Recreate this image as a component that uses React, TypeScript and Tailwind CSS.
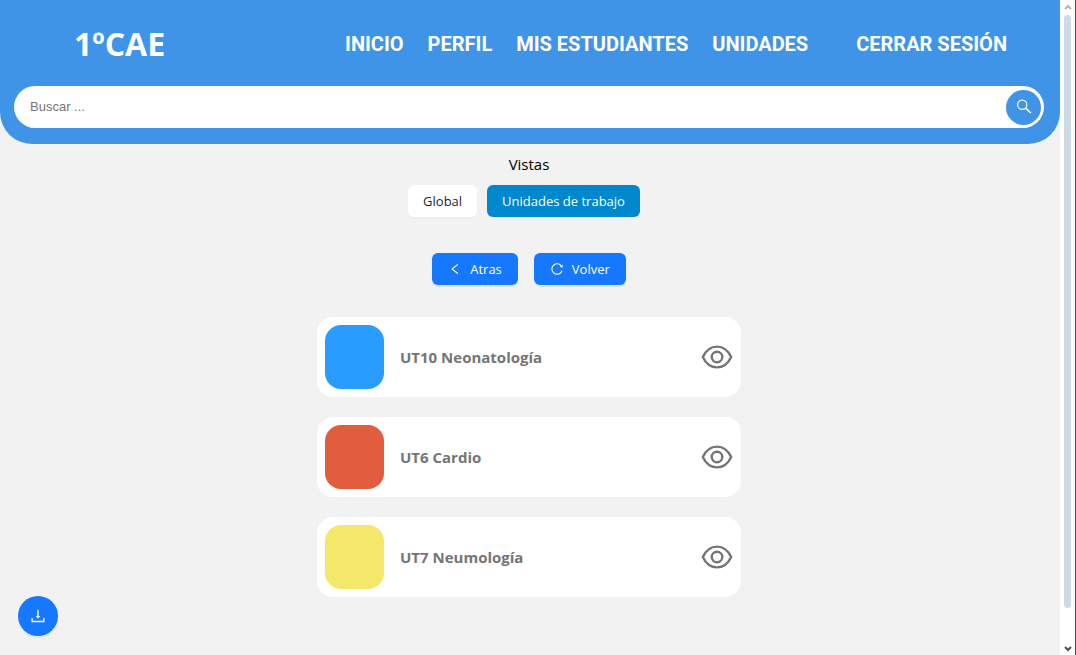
import React from "react";
import {
  AiOutlineDownload,
  AiOutlineLeft,
  AiOutlineReload,
} from "react-icons/ai";

const links = ["INICIO", "PERFIL", "MIS ESTUDIANTES", "UNIDADES"];

const units = [
  { name: "UT10 Neonatología", color: "bg-[#289dff]" },
  { name: "UT6 Cardio", color: "bg-[#e15d3e]" },
  { name: "UT7 Neumología", color: "bg-[#f3e869]" },
];

function SearchIcon() {
  return (
    <svg viewBox="0 0 16 16" className="size-4" fill="none" stroke="currentColor" strokeWidth="1.2">
      <circle cx="6.2" cy="5.7" r="4.6" />
      <path d="M9.6 9.1 14.8 14" strokeWidth="1.6" />
    </svg>
  );
}

function EyeIcon() {
  return (
    <svg viewBox="0 0 32 24" className="h-6 w-8" fill="none" stroke="currentColor" strokeWidth="2.4" strokeLinejoin="round">
      <path d="M1.8 12C5 5.200 9.800 1.600 16 1.600S27 5.200 30.200 12C27 18.800 22.200 22.400 16 22.400S5 18.800 1.800 12Z" />
      <circle cx="16" cy="12" r="5.300" />
    </svg>
  );
}

function Header() {
  return (
    <header className="rounded-b-[32px] bg-[#3f94e8] px-3.5 pb-4 text-white">
      <div className="flex h-[86px] items-center justify-between pr-[39px] pl-[60px]">
        <h1 className="pt-0.5 text-[32px] leading-10 font-bold">1ºCAE</h1>
        <nav className="flex gap-6 pt-px font-[Roboto,sans-serif] text-xl font-bold">
          {links.map((link) => (
            <a key={link} href="#">{link}</a>
          ))}
          <a href="#" className="ml-6">CERRAR SESIÓN</a>
        </nav>
      </div>
      <form className="mr-0.5 flex h-[42px] items-center rounded-full bg-white pr-[3px] pl-4">
        <input
          type="search"
          aria-label="Buscar"
          placeholder="Buscar ..."
          className="min-w-0 flex-1 bg-transparent font-['Liberation_Sans',sans-serif] text-[13px] text-gray-800 outline-none placeholder:text-[#757575]"
        />
        <button type="button" aria-label="Buscar" className="flex size-[35px] items-center justify-center rounded-full bg-[#3f94e8]">
          <SearchIcon />
        </button>
      </form>
    </header>
  );
}

function ScrollRail() {
  return (
    <div aria-hidden="true" className="flex w-4 shrink-0 flex-col items-center border-r border-[#2f5d80] bg-white">
      <svg viewBox="0 0 8 6" className="mt-1 mb-[5px] h-1.5 w-2 shrink-0" fill="none" stroke="#b5b5b5" strokeWidth="2">
        <path d="M1 5 4 2l3 3" />
      </svg>
      <div className="mb-[38px] w-[7px] flex-1 rounded-full bg-[#cfdbe4]" />
      <svg viewBox="0 0 8 6" className="mb-[3px] h-1.5 w-2 shrink-0" fill="none" stroke="#505050" strokeWidth="2">
        <path d="m1 1 3 3 3-3" />
      </svg>
    </div>
  );
}

export default function App() {
  return (
    <div className="flex h-screen bg-[#f2f2f2] font-['Open_Sans','Noto_Sans',sans-serif]">
      <div className="min-w-0 flex-1">
        <Header />
        <main className="flex flex-col items-center pt-2 pr-0.5">
          <h2 className="text-[15px] leading-6 text-black">Vistas</h2>
          <div className="mt-[9px] mr-2.5 flex gap-2.5 text-[13px]">
            <button type="button" className="h-8 rounded-md bg-white px-[15px] pt-0.5 text-black/90 shadow-[0_2px_0_rgba(0,0,0,0.02)]">Global</button>
            <button type="button" className="h-8 rounded-md bg-[#0088ce] px-[15px] pt-0.5 text-white">Unidades de trabajo</button>
          </div>
          <div className="mt-9 flex gap-4 text-[13px] text-white">
            <button type="button" className="flex h-8 items-center gap-2 rounded-md bg-[#1677ff] px-4 shadow-[0_2px_0_rgba(5,145,255,0.1)]">
              <AiOutlineLeft className="size-3.5" />
              <span className="pt-px">Atras</span>
            </button>
            <button type="button" className="flex h-8 items-center gap-2 rounded-md bg-[#1677ff] px-4 shadow-[0_2px_0_rgba(5,145,255,0.1)]">
              <AiOutlineReload className="size-3.5" />
              <span className="pt-px">Volver</span>
            </button>
          </div>
          <ul className="mt-8 flex w-full max-w-[424px] flex-col gap-5">
            {units.map((unit) => (
              <li key={unit.name} className="flex h-20 items-center rounded-2xl bg-white p-2 text-[#757575]">
                <span className={`h-16 w-[59px] rounded-2xl ${unit.color}`} />
                <span className="ml-4 flex-1 text-[15px] font-bold">{unit.name}</span>
                <button type="button" aria-label={`Ver ${unit.name}`}>
                  <EyeIcon />
                </button>
              </li>
            ))}
          </ul>
        </main>
      </div>
      <ScrollRail />
      <button
        type="button"
        aria-label="Descargar"
        className="fixed bottom-[19px] left-[18px] flex size-10 items-center justify-center rounded-full bg-[#1677ff] text-white shadow-[0_2px_0_rgba(5,145,255,0.1)]"
      >
        <AiOutlineDownload className="size-[18px]" />
      </button>
    </div>
  );
}
